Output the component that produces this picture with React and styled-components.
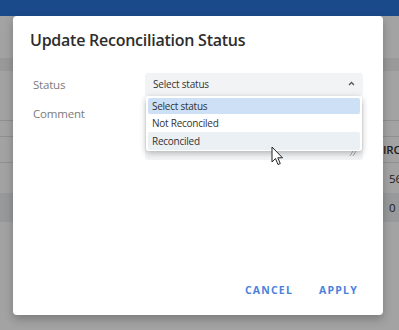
import styled, { createGlobalStyle } from 'styled-components';

const GlobalStyle = createGlobalStyle`
    html, body {
        margin: 0;
        padding: 0;
    }
    body {
        font-family: "Open Sans", "Liberation Sans", sans-serif;
        background: #ffffff;
    }
`;

const Page = styled.div`
    position: relative;
    width: 399px;
    height: 330px;
    overflow: hidden;
    background: #ffffff;
`;

const TopBar = styled.div`
    height: 16px;
    background: #2974d8;
`;

const Table = styled.div`
    display: flex;
    flex-direction: column;
    padding-top: 42px;
`;

const TableRow = styled.div`
    height: ${p => p.$h}px;
    background: ${p => p.$bg || '#ffffff'};
    border-bottom: ${p => (p.$line ? '1px solid #e2e2e2' : 'none')};
    display: flex;
    align-items: center;
    justify-content: flex-end;
    font-size: 11.5px;
    letter-spacing: -0.2px;
    color: #333;
    box-sizing: border-box;
`;

const Cell = styled.div`
    width: 16px;
    box-sizing: border-box;
    white-space: nowrap;
    padding-left: ${p => (p.$head ? 0 : 6)}px;
    font-weight: ${p => (p.$head ? 600 : 400)};
`;

const Backdrop = styled.div`
    position: absolute;
    inset: 0;
    background: rgba(0, 0, 0, 0.36);
    display: flex;
    align-items: flex-start;
    padding: 16px 0 0 13px;
`;

const Dialog = styled.div`
    position: relative;
    width: 370px;
    height: 299px;
    box-sizing: border-box;
    background: #ffffff;
    border-radius: 4px;
    box-shadow: 0 4px 10px rgba(0, 0, 0, 0.25);
    display: flex;
    flex-direction: column;
    padding: 12px 20px 11px 17px;
`;

const Title = styled.h2`
    margin: 0;
    font-size: 16px;
    line-height: 24px;
    font-weight: 600;
    letter-spacing: -0.25px;
    color: #2d2d2d;
`;

const Form = styled.div`
    display: flex;
    flex-direction: column;
    gap: 6px;
    margin-top: 21px;
    padding-left: 3px;
`;

const FieldRow = styled.div`
    display: flex;
    align-items: ${p => (p.$top ? 'flex-start' : 'center')};
`;

const Label = styled.div`
    width: 112px;
    font-size: 11.5px;
    letter-spacing: -0.2px;
    line-height: 23px;
    color: #7b7b7b;
`;

const SelectWrap = styled.div`
    position: relative;
    width: 218px;
`;

const SelectBox = styled.div`
    height: 23px;
    box-sizing: border-box;
    background: #f2f3f5;
    border-radius: 3px;
    display: flex;
    align-items: center;
    justify-content: space-between;
    padding: 0 8px 2px;
    font-size: 10px;
    letter-spacing: -0.2px;
    color: #333;
`;

const TextArea = styled.div`
    position: relative;
    width: 218px;
    height: 58px;
    background: #f2f3f5;
    border-radius: 3px;
`;

const Grip = styled.svg`
    position: absolute;
    right: 6px;
    bottom: 4px;
`;

const Menu = styled.div`
    position: absolute;
    top: 23px;
    left: 1px;
    width: 216px;
    box-sizing: border-box;
    padding: 2px 2px 1px;
    background: #ffffff;
    border-radius: 3px;
    box-shadow: 0 2px 6px rgba(0, 0, 0, 0.28);
    z-index: 2;
`;

const Option = styled.div`
    height: ${p => (p.$first ? 16 : 18)}px;
    display: flex;
    align-items: center;
    padding: 0 4px;
    border-radius: 2px;
    font-size: 10px;
    letter-spacing: -0.25px;
    color: #333;
    background: ${p => (p.$selected ? '#cde0f6' : p.$hover ? '#ebf0f5' : 'transparent')};
`;

const Footer = styled.div`
    margin-top: auto;
    display: flex;
    justify-content: flex-end;
    gap: 10px;
    margin-right: -3px;
`;

const Button = styled.button`
    border: none;
    background: none;
    padding: 6px 8px;
    font-family: inherit;
    font-size: 10.5px;
    line-height: 16px;
    font-weight: 700;
    letter-spacing: 1.2px;
    color: #4c82db;
    cursor: pointer;
`;

const Cursor = styled.svg`
    position: absolute;
    left: 271px;
    top: 146px;
    z-index: 5;
`;

const rows = [
    { h: 13, bg: '#efefef' },
    { h: 50, bg: '#ffffff', line: true },
    { h: 16, line: true },
    { h: 26, line: true, cell: 'IRC', head: true },
    { h: 30, cell: '56' },
    { h: 29, bg: '#eef0f2', cell: '0' },
];

const options = ['Select status', 'Not Reconciled', 'Reconciled'];

const App = () => {
    return (<>
        <GlobalStyle />
        <Page>
            <TopBar />
            <Table>
                {rows.map((r, i) => (
                    <TableRow key={i} $h={r.h} $bg={r.bg} $line={r.line}>
                        {r.cell && <Cell $head={r.head}>{r.cell}</Cell>}
                    </TableRow>
                ))}
            </Table>
            <Backdrop>
                <Dialog>
                    <Title>Update Reconciliation Status</Title>
                    <Form>
                        <FieldRow>
                            <Label>Status</Label>
                            <SelectWrap>
                                <SelectBox>
                                    <span>Select status</span>
                                    <svg width="7" height="5" viewBox="0 0 7 5">
                                        <path d="M1 4 L3.5 1.5 L6 4" fill="none" stroke="#555" strokeWidth="1.3" />
                                    </svg>
                                </SelectBox>
                                <Menu>
                                    {options.map((o, i) => (
                                        <Option key={o} $first={i === 0} $selected={i === 0} $hover={i === 2}>{o}</Option>
                                    ))}
                                </Menu>
                            </SelectWrap>
                        </FieldRow>
                        <FieldRow $top>
                            <Label>Comment</Label>
                            <TextArea>
                                <Grip width="8" height="6" viewBox="0 0 8 6">
                                    <path d="M1 6 L4 1 M4 6 L7 1" stroke="#aaa" strokeWidth="1" />
                                </Grip>
                            </TextArea>
                        </FieldRow>
                    </Form>
                    <Footer>
                        <Button>CANCEL</Button>
                        <Button>APPLY</Button>
                    </Footer>
                </Dialog>
            </Backdrop>
            <Cursor width="14" height="21" viewBox="0 0 14 21">
                <path d="M1 1 L1 16 L4.5 12.5 L7 18.5 L9.3 17.5 L6.8 11.8 L11.5 11.8 Z" fill="#fff" stroke="#222" strokeWidth="1" strokeLinejoin="round" />
            </Cursor>
        </Page>
    </>);
};

export default App;
